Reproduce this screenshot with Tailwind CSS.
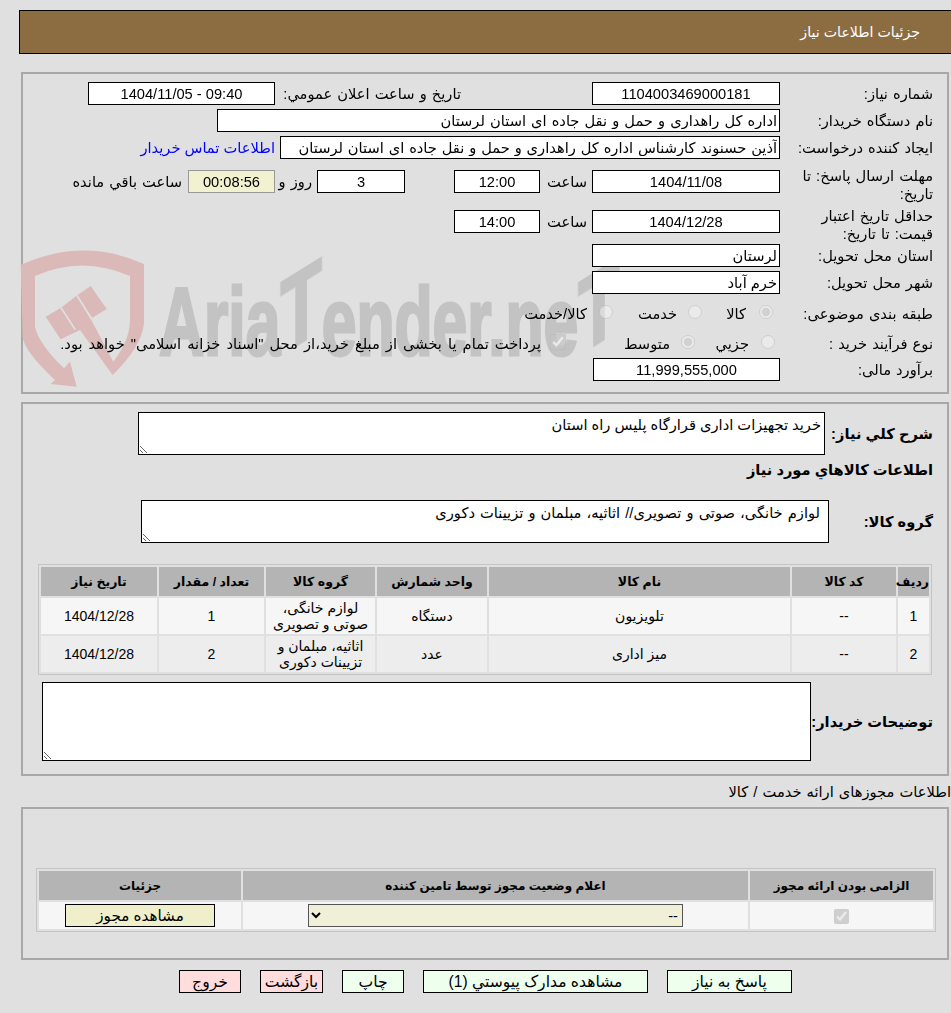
<!DOCTYPE html>
<html lang="fa" dir="rtl">

<head>
    <meta charset="UTF-8">
    <title>جزئیات اطلاعات نیاز</title>
    <script src="https://cdn.jsdelivr.net/npm/@tailwindcss/browser@4"></script>
</head>

<body class="bg-[#e0e0e0] text-black text-[14.67px] leading-[18px] font-['Liberation_Sans','DejaVu_Sans',sans-serif] overflow-hidden">
    <div class="w-[951px] h-[1013px] pt-[10px]">
        <!-- header -->
        <div class="h-[44px] ml-[19px] border border-black border-r-0 bg-[#8c6d42] text-white text-[14.2px] flex items-center pr-[31px]">
            <span>جزئیات اطلاعات نیاز</span>
        </div>

        <!-- main form -->
        <div class="relative mt-[18px] mr-[2px] ml-[21px] h-[322px] border-2 border-[#a8a8a8] pt-[8px] pr-[14px] [word-spacing:1px]">
            <!-- watermark -->
            <svg class="absolute left-[-23px] top-[166px]" width="170" height="170" viewBox="0 0 510 510">
                <path fill="#dbb9b9" fill-rule="evenodd" d="M62 75 Q250 -10 432 72 L432 250 Q425 320 338 405 L240 270 L182 298 L137 230 L183 203 L226 170 L233 165 L272 138 L320 207 L272 236 L340 365 Q390 300 390 240 L390 108 Q245 45 105 108 L105 260 Q115 310 192 385 L210 365 L230 440 L152 432 L165 420 Q70 330 68 290 Z"></path>
                <path fill="#e0e0e0" d="M180 203 L184 200 L228 268 L224 271 Z M229 168 L233 165 L278 236 L273 239 Z"></path>
            </svg>
            <div class="absolute left-[136px] top-[200px] h-[90px] flex items-baseline text-[#c3c3c3] font-bold text-[96px] leading-[90px] whitespace-nowrap origin-top-left scale-x-[0.65] font-['Liberation_Sans'] [-webkit-text-stroke:3px_#c3c3c3]" dir="ltr">
                <span>Aria</span><span class="inline-block -skew-y-[22deg] origin-bottom-left text-[104px]">T</span><span>ender.ne</span><span class="inline-block -skew-y-[22deg] origin-bottom-left text-[104px]">T</span>
            </div>

            <div class="relative flex flex-col">
                <div class="flex items-center h-[23px]">
                    <div class="w-[153px]">شماره نیاز:</div>
                    <input readonly value="1104003469000181" class="w-[188px] h-[23px] bg-white border border-black text-center">
                    <div class="mr-[131px] w-[186px]">تاریخ و ساعت اعلان عمومي:</div>
                    <input readonly value="09:40 - 1404/11/05" class="w-[187px] h-[23px] bg-white border border-black text-center">
                </div>
                <div class="flex items-center h-[23px] mt-[4px]">
                    <div class="w-[153px]">نام دستگاه خریدار:</div>
                    <input readonly value="اداره کل راهداری و حمل و نقل جاده ای استان لرستان" class="w-[563px] h-[23px] bg-white border border-black px-[2px] [word-spacing:1px]">
                </div>
                <div class="flex items-center h-[23px] mt-[4px]">
                    <div class="w-[153px]">ایجاد کننده درخواست:</div>
                    <input readonly value="آذین حسنوند کارشناس اداره کل راهداری و حمل و نقل جاده ای استان لرستان" class="w-[500px] h-[23px] bg-white border border-black px-[2px] [word-spacing:0.8px]">
                    <a href="#" class="mr-[5px] text-[#0000ff] [word-spacing:0px]">اطلاعات تماس خریدار</a>
                </div>
                <div class="flex items-center h-[23px] mt-[11px]">
                    <div class="w-[153px] h-[36px] leading-[18px] mt-[6px]">مهلت ارسال پاسخ: تا تاریخ:</div>
                    <input readonly value="1404/11/08" class="w-[188px] h-[23px] bg-white border border-black text-center">
                    <div class="w-[52px] pr-[5px]">ساعت</div>
                    <input readonly value="12:00" class="w-[86px] h-[23px] bg-white border border-black text-center">
                    <input readonly value="3" class="mr-[49px] w-[88px] h-[23px] bg-white border border-black text-center">
                    <div class="w-[42px] pr-[5px]">روز و</div>
                    <div class="w-[87px] h-[23px] bg-[#f2f2d0] border border-[#999] flex items-center justify-center">00:08:56</div>
                    <div class="mr-[6px]">ساعت باقي مانده</div>
                </div>
                <div class="flex items-center h-[23px] mt-[17px]">
                    <div class="w-[153px] h-[36px] leading-[18px] mt-[6px]">حداقل تاریخ اعتبار<br>قیمت: تا تاریخ:</div>
                    <input readonly value="1404/12/28" class="w-[188px] h-[23px] bg-white border border-black text-center">
                    <div class="w-[52px] pr-[5px]">ساعت</div>
                    <input readonly value="14:00" class="w-[86px] h-[23px] bg-white border border-black text-center">
                </div>
                <div class="flex items-center h-[23px] mt-[11px]">
                    <div class="w-[153px]">استان محل تحویل:</div>
                    <input readonly value="لرستان" class="w-[188px] h-[23px] bg-white border border-black px-[2px]">
                </div>
                <div class="flex items-center h-[23px] mt-[4px]">
                    <div class="w-[153px]">شهر محل تحویل:</div>
                    <input readonly value="خرم آباد" class="w-[188px] h-[23px] bg-white border border-black px-[2px]">
                </div>
                <div class="flex items-center h-[23px] mt-[8px]">
                    <div class="w-[153px]">طبقه بندی موضوعی:</div>
                    <input type="radio" disabled checked class="w-[14px] h-[14px] m-0 mr-[7px] -mt-[3px] opacity-70">
                    <div class="w-[57px] pr-[13px]">کالا</div>
                    <input type="radio" disabled class="w-[14px] h-[14px] m-0 -mt-[3px] opacity-70">
                    <div class="w-[75px] pr-[11px]">خدمت</div>
                    <input type="radio" disabled class="w-[14px] h-[14px] m-0 -mt-[3px] opacity-70">
                    <div class="pr-[12px]">کالا/خدمت</div>
                </div>
                <div class="flex items-center h-[23px] mt-[7px]">
                    <div class="w-[153px]">نوع فرآیند خرید :</div>
                    <input type="radio" disabled class="w-[14px] h-[14px] m-0 mr-[5px] -mt-[3px] opacity-70">
                    <div class="w-[66px] pr-[12px]">جزیي</div>
                    <input type="radio" disabled checked class="w-[14px] h-[14px] m-0 -mt-[3px] opacity-70">
                    <div class="w-[115px] pr-[11px]">متوسط</div>
                    <input type="checkbox" disabled checked class="w-[16px] h-[16px] m-0 -mt-[3px]">
                    <div class="pr-[9px] whitespace-nowrap [word-spacing:2px]">پرداخت تمام یا بخشی از مبلغ خرید،از محل "اسناد خزانه اسلامی" خواهد بود.</div>
                </div>
                <div class="flex items-center h-[23px] mt-[3px]">
                    <div class="w-[153px]">برآورد مالی:</div>
                    <input readonly value="11,999,555,000" class="w-[187px] h-[23px] bg-white border border-black text-center">
                </div>
            </div>
        </div>

        <!-- details -->
        <div class="mt-[8px] mr-[2px] ml-[21px] h-[374px] border-2 border-[#a8a8a8] pt-[8px] pr-[14px] pl-[15px]">
            <div class="flex items-center h-[43px]">
                <div class="w-[108px] font-bold mt-[1px]">شرح کلي نیاز:</div>
                <textarea readonly class="w-[687px] h-[43px] bg-white border border-black px-[3px] py-[3px]">خرید تجهیزات اداری قرارگاه پلیس راه استان</textarea>
            </div>
            <div class="font-bold mt-[6px] h-[18px]">اطلاعات کالاهاي مورد نیاز</div>
            <div class="flex items-center h-[43px] mt-[21px]">
                <div class="w-[104px] font-bold">گروه کالا:</div>
                <textarea readonly class="w-[688px] h-[43px] bg-white border border-black pr-[8px] pl-[3px] py-[3px] [word-spacing:1px]">لوازم خانگی، صوتی و تصویری// اثاثیه، مبلمان و تزیینات دکوری</textarea>
            </div>
            <div class="mt-[21px] border border-[#c4c4c4] mr-[1px] w-[894px]">
                <table class="w-full table-fixed border-separate border-spacing-[2px] text-center text-[14px]">
                    <thead>
                        <tr class="h-[29px] bg-[#b4b4b4] text-[12.5px]">
                            <th class="w-[31px] font-bold">ردیف</th>
                            <th class="w-[104px] font-bold">کد کالا</th>
                            <th class="w-[301px] font-bold">نام کالا</th>
                            <th class="w-[110px] font-bold">واحد شمارش</th>
                            <th class="w-[109px] font-bold">گروه کالا</th>
                            <th class="w-[105px] font-bold">تعداد / مقدار</th>
                            <th class="font-bold">تاریخ نیاز</th>
                        </tr>
                    </thead>
                    <tbody>
                        <tr class="h-[36px] bg-[#f6f6f6]">
                            <td>1</td>
                            <td>--</td>
                            <td>تلویزیون</td>
                            <td>دستگاه</td>
                            <td class="leading-[16px]">لوازم خانگی، صوتی و تصویری</td>
                            <td>1</td>
                            <td>1404/12/28</td>
                        </tr>
                        <tr class="h-[36px] bg-[#ededed]">
                            <td>2</td>
                            <td>--</td>
                            <td>میز اداری</td>
                            <td>عدد</td>
                            <td class="leading-[16px]">اثاثیه، مبلمان و تزیینات دکوری</td>
                            <td>2</td>
                            <td>1404/12/28</td>
                        </tr>
                    </tbody>
                </table>
            </div>
            <div class="flex items-center h-[79px] mt-[7px]">
                <div class="w-[122px] font-bold">توضیحات خریدار:</div>
                <textarea readonly class="w-[769px] h-[79px] bg-white border border-black"></textarea>
            </div>
        </div>

        <!-- permits -->
        <div class="mt-[7px] h-[18px] whitespace-nowrap [word-spacing:1px]">اطلاعات مجوزهای ارائه خدمت / کالا</div>
        <div class="mt-[6px] mr-[2px] ml-[21px] h-[153px] border-2 border-[#a8a8a8] pt-[59px] pr-[11px]">
            <div class="border border-[#c4c4c4] w-[900px]">
                <table class="w-full table-fixed border-separate border-spacing-[2px] text-center">
                    <thead>
                        <tr class="h-[29px] bg-[#b4b4b4] text-[12px]">
                            <th class="w-[183px] font-bold">الزامی بودن ارائه مجوز</th>
                            <th class="w-[505px] font-bold">اعلام وضعیت مجوز توسط تامین کننده</th>
                            <th class="font-bold">جزئیات</th>
                        </tr>
                    </thead>
                    <tbody>
                        <tr class="h-[27px] bg-[#f6f6f6]">
                            <td><input type="checkbox" disabled checked class="w-[15px] h-[15px] m-0 align-middle"></td>
                            <td>
                                <select disabled class="block mx-auto w-[375px] h-[23px] bg-[#f0f0d8] border border-[#555] text-black opacity-100">
                                    <option>--</option>
                                </select>
                            </td>
                            <td>
                                <button class="block mx-auto w-[150px] h-[23px] bg-[#efefcc] border border-black text-[15.2px]">مشاهده مجوز</button>
                            </td>
                        </tr>
                    </tbody>
                </table>
            </div>
        </div>

        <!-- actions -->
        <div class="flex mt-[10px] gap-[19px] h-[23px] pr-[159px] text-[15.6px]">
            <button class="w-[125px] h-[23px] bg-[#eeffee] border border-black">پاسخ به نیاز</button>
            <button class="w-[225px] h-[23px] bg-[#eeffee] border border-black">مشاهده مدارک پیوستي (1)</button>
            <button class="w-[62px] h-[23px] bg-[#eeffee] border border-black">چاپ</button>
            <button class="w-[63px] h-[23px] bg-[#ffdddd] border border-black">بازگشت</button>
            <button class="w-[62px] h-[23px] bg-[#ffdddd] border border-black">خروج</button>
        </div>
    </div>
</body>

</html>
